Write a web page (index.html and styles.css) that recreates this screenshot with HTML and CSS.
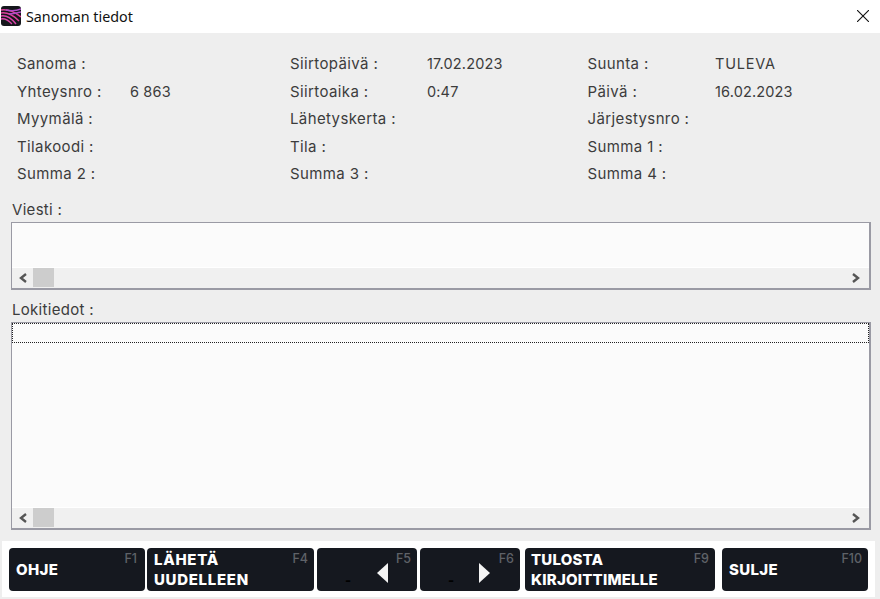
FILE: index.html
```html
<!DOCTYPE html>
<html lang="fi">
<head>
<meta charset="utf-8">
<title>Sanoman tiedot</title>
<link rel="stylesheet" href="styles.css">
</head>
<body>
<div class="window">
  <header class="titlebar">
    <svg class="logo" width="20" height="20" viewBox="0 0 20 20">
      <rect width="20" height="20" rx="3" fill="#15171c"/>
      <path d="M0 4C7 3 14 6 20 11" fill="none" stroke="#e0409c" stroke-width="1.5"/>
      <path d="M0 7C7 6 13 10 18 15" fill="none" stroke="#e0409c" stroke-width="1.5"/>
      <path d="M0 10C6 9 11 13 15 18" fill="none" stroke="#d844a8" stroke-width="1.5"/>
      <path d="M0 13C4 12 8 15 11 18" fill="none" stroke="#d844a8" stroke-width="1.4"/>
      <path d="M5 4C10 5 15 5 20 3" fill="none" stroke="#b04cc8" stroke-width="1.4"/>
      <path d="M8 8C12 8 16 7 20 6" fill="none" stroke="#b04cc8" stroke-width="1.4"/>
    </svg>
    <span class="title">Sanoman tiedot</span>
    <svg class="close" width="12" height="12" viewBox="0 0 12 12"><path d="M0 0L12 12M12 0L0 12" stroke="#111" stroke-width="1.1" fill="none"/></svg>
  </header>
  <main class="content">
    <section class="info">
      <span>Sanoma :</span><span></span><span>Siirtopäivä :</span><span class="val">17.02.2023</span><span>Suunta :</span><span class="val val-caps">TULEVA</span>
      <span>Yhteysnro :</span><span class="val">6 863</span><span>Siirtoaika :</span><span class="val">0:47</span><span>Päivä :</span><span class="val">16.02.2023</span>
      <span>Myymälä :</span><span></span><span>Lähetyskerta :</span><span></span><span>Järjestysnro :</span><span></span>
      <span>Tilakoodi :</span><span></span><span>Tila :</span><span></span><span>Summa 1 :</span><span></span>
      <span>Summa 2 :</span><span></span><span>Summa 3 :</span><span></span><span>Summa 4 :</span><span></span>
    </section>
    <label class="field-label label-viesti">Viesti :</label>
    <div class="listbox box-viesti">
      <div class="list-area"></div>
      <div class="hscroll">
        <svg class="arrow" width="8" height="10" viewBox="0 0 8 10"><path d="M7 1L2 5L7 9" fill="none" stroke="#555" stroke-width="2.4"/></svg>
        <span class="thumb"></span>
        <svg class="arrow arrow-right" width="8" height="10" viewBox="0 0 8 10"><path d="M1 1L6 5L1 9" fill="none" stroke="#555" stroke-width="2.4"/></svg>
      </div>
    </div>
    <label class="field-label label-loki">Lokitiedot :</label>
    <div class="listbox box-loki">
      <div class="list-area"><div class="focus-row"></div></div>
      <div class="hscroll">
        <svg class="arrow" width="8" height="10" viewBox="0 0 8 10"><path d="M7 1L2 5L7 9" fill="none" stroke="#555" stroke-width="2.4"/></svg>
        <span class="thumb"></span>
        <svg class="arrow arrow-right" width="8" height="10" viewBox="0 0 8 10"><path d="M1 1L6 5L1 9" fill="none" stroke="#555" stroke-width="2.4"/></svg>
      </div>
    </div>
  </main>
  <footer class="footer">
    <button class="btn btn-ohje"><span class="btn-text">OHJE</span><span class="key">F1</span></button>
    <button class="btn btn-laheta"><span class="btn-text">LÄHETÄ<br>UUDELLEEN</span><span class="key">F4</span></button>
    <button class="btn btn-nav"><span class="dash">-</span><svg class="tri" width="11" height="20" viewBox="0 0 11 20"><path d="M11 0V20L0 10Z" fill="#f4f4f4"/></svg><span class="key">F5</span></button>
    <button class="btn btn-nav btn-next"><span class="dash">-</span><svg class="tri" width="11" height="20" viewBox="0 0 11 20"><path d="M0 0V20L11 10Z" fill="#f4f4f4"/></svg><span class="key">F6</span></button>
    <button class="btn btn-tulosta"><span class="btn-text">TULOSTA<br>KIRJOITTIMELLE</span><span class="key">F9</span></button>
    <button class="btn btn-sulje"><span class="btn-text">SULJE</span><span class="key">F10</span></button>
  </footer>
</div>
</body>
</html>
```
FILE: styles.css
```css
* { box-sizing: border-box; }
html, body { margin: 0; padding: 0; }
body { width: 880px; height: 599px; overflow: hidden; background: #eeeeee; font-family: Inter, "Liberation Sans", sans-serif; color: #3c3c3c; }
.window { display: flex; flex-direction: column; height: 599px; }
.titlebar { height: 33px; background: #fff; display: flex; align-items: center; padding: 0 11px 0 1px; }
.logo { flex: none; margin-top: -1px; }
.title { margin-left: 5px; font: 14.3px "Noto Sans", sans-serif; color: #111; flex: 1; margin-top: -1px; }
.close { flex: none; margin-top: -1px; }
.content { flex: 1; height: 508px; padding: 0 9px 0 11px; display: flex; flex-direction: column; }
.info { display: grid; grid-template-columns: 113px 160px 137px 160.5px 127.5px 1fr; grid-auto-rows: 27.5px; padding: 17px 0 0 6px; font-size: 15px; letter-spacing: 0.38px; line-height: 27px; white-space: nowrap; }
.val { font-size: 14.5px; letter-spacing: 0.15px; }
.val-caps { letter-spacing: 0.8px; font-size: 14.5px; }
.field-label { font-size: 15px; letter-spacing: 0.3px; line-height: 18px; padding-left: 1px; }
.label-viesti { margin-top: 13px; height: 21px; }
.label-loki { margin-top: 11px; height: 21px; }
.listbox { border-style: solid; border-width: 1px 2px 2px 1px; border-color: #9a9aa4; background: #fbfbfb; display: flex; flex-direction: column; width: 860px; }
.box-viesti { height: 68px; }
.box-loki { height: 208px; }
.list-area { flex: 1; }
.focus-row { height: 20px; border: 1px dotted #222; }
.hscroll { height: 21px; background: #f0f0f0; display: flex; align-items: center; padding: 0 10px 0 7px; border-top: 1px solid #fff; }
.arrow { flex: none; }
.arrow-right { margin-left: auto; margin-right: -1px; }
.thumb { width: 21px; height: 19px; background: #cdcdcd; margin-left: 6px; }
.footer { height: 56px; margin: 0 5px 2px 2px; background: #fff; display: flex; align-items: flex-start; padding: 7px 0 0 7px; flex: none; }
.btn { position: relative; height: 43px; border: 0; border-radius: 4px; background: #15181f; color: #fff; font-family: Inter, "Liberation Sans", sans-serif; font-weight: 800; font-size: 15px; letter-spacing: 0.35px; line-height: 20px; text-align: left; padding: 1px 0 0 7px; flex: none; display: flex; align-items: center; }
.btn-text { white-space: nowrap; }
.key { position: absolute; top: 5px; right: 6px; font-size: 12.5px; letter-spacing: 0; line-height: 12px; font-weight: 500; color: #5f6268; }
.btn-ohje { width: 136px; margin-right: 2px; }
.btn-ohje .key { right: 8px; }
.btn-laheta { width: 167px; margin-right: 3px; letter-spacing: 0.7px; }
.btn-nav { width: 100px; margin-right: 3px; }
.btn-next { margin-right: 5px; }
.btn-tulosta { width: 190px; margin-right: 7px; padding-left: 6px; letter-spacing: 0.2px; }
.btn-sulje { width: 146px; }
.dash { position: absolute; left: 28px; top: 24px; font-size: 13px; line-height: 16px; color: #000; }
.tri { position: absolute; left: 60px; top: 15px; }
.btn-next .tri { left: 59px; }
```
